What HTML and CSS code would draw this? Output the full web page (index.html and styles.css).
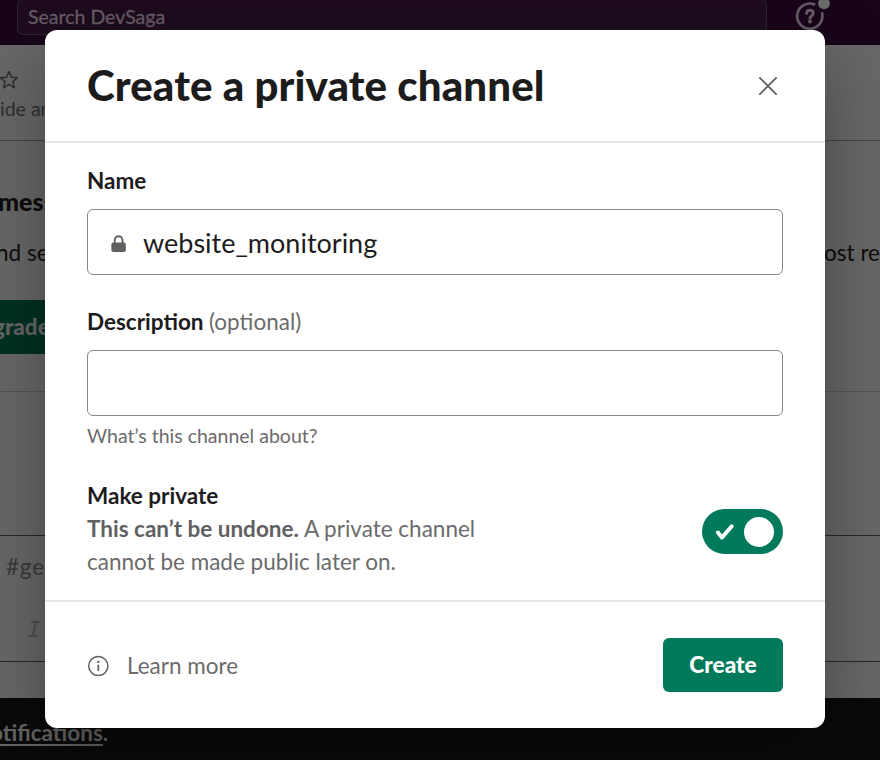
FILE: index.html
```html
<!DOCTYPE html>
<html lang="en">
<head>
<meta charset="utf-8">
<title>Create a private channel</title>
<link rel="stylesheet" href="styles.css">
</head>
<body>
<div class="app">
  <header class="topbar">
    <div class="search">Search DevSaga</div>
    <div class="help">
      <svg width="36" height="32" viewBox="0 0 36 32" fill="none">
        <path d="M20.200 4.800A12.600 12.600 0 1 0 26.800 12.400" stroke="#655b65" stroke-width="2.700"/>
        <path d="M11.600 13.600c0-2.100 1.300-3.400 3.300-3.400s3.400 1.200 3.400 3c0 2.500-3.400 2.600-3.400 5.200" stroke="#655b65" stroke-width="2.900" stroke-linecap="round"/>
        <circle cx="15" cy="21.600" r="2" fill="#655b65"/>
        <circle cx="29" cy="3.300" r="5.900" fill="#6b6a6c"/>
      </svg>
    </div>
  </header>
  <section class="chan-head">
    <svg class="star" width="20" height="20" viewBox="0 0 20 20" fill="none" stroke="#2c2c2d" stroke-width="1.400" stroke-linejoin="round"><path d="M10 1.500l2.500 5.700 6 .5-4.600 3.900 1.500 6.200-5.400-3.400-5.400 3.400 1.500-6.200L1.500 7.700l6-.5z"/></svg>
    <div class="topic">ide ar</div>
  </section>
  <section class="banner">
    <div class="banner-title">mess</div>
    <div class="banner-row"><span>nd se</span><span>ost re</span></div>
    <div class="upgrade">grade</div>
  </section>
  <section class="messages"></section>
  <section class="composer">
    <div class="placeholder">#ge</div>
    <div class="format">I</div>
  </section>
  <div class="gap"></div>
  <footer class="notice"><span class="link">otifications</span>.</footer>
</div>

<div class="modal">
  <div class="modal-head">
    <h1>Create a private channel</h1>
    <svg class="close" width="20" height="20" viewBox="0 0 20 20" stroke="#616061" stroke-width="1.900" stroke-linecap="round"><path d="M1.900 1.900l16.200 16.200M18.100 1.900L1.900 18.100"/></svg>
  </div>
  <div class="modal-body">
    <label class="label">Name</label>
    <div class="input">
      <svg class="lock" width="16" height="18" viewBox="0 0 16 18"><rect x=".4" y="7.500" width="14.400" height="9.500" rx="1.800" fill="#616061"/><path d="M3.700 8.500V5.200a3.900 3.900 0 0 1 7.800 0v3.300" fill="none" stroke="#616061" stroke-width="1.900"/></svg>
      <span>website_monitoring</span>
    </div>
    <label class="label second">Description <span class="optional">(optional)</span></label>
    <div class="input"></div>
    <div class="hint">What’s this channel about?</div>
    <div class="private">
      <div class="private-text">
        <div class="label">Make private</div>
        <p><b>This can’t be undone.</b> A private channel<br>cannot be made public later on.</p>
      </div>
      <div class="toggle">
        <svg width="20" height="18" viewBox="0 0 20 18" fill="none" stroke="#fff" stroke-width="4" stroke-linecap="round" stroke-linejoin="round"><path d="M2.900 9.500l4.100 5L16.700 3.300"/></svg>
        <span class="knob"></span>
      </div>
    </div>
  </div>
  <div class="modal-foot">
    <div class="learn">
      <svg width="22" height="22" viewBox="0 0 22 22" fill="none"><circle cx="11.300" cy="12" r="9.600" stroke="#616061" stroke-width="1.500"/><path d="M11.300 10.700v6.200" stroke="#616061" stroke-width="1.700"/><circle cx="11.300" cy="7.900" r="1.200" fill="#616061"/></svg>
      <span>Learn more</span>
    </div>
    <button class="create">Create</button>
  </div>
</div>
</body>
</html>
```
FILE: styles.css
```css
* { box-sizing: border-box; }
body {
  margin: 0;
  width: 880px;
  height: 760px;
  overflow: hidden;
  position: relative;
  font-family: Lato, "Liberation Sans", sans-serif;
  font-size: 22.5px;
  color: #1d1c1d;
}
.app {
  height: 760px;
  display: flex;
  flex-direction: column;
  background: #686868;
  overflow: hidden;
  white-space: nowrap;
}
.app > * { flex: none; }
.topbar {
  height: 45px;
  display: flex;
  background: #190519;
}
.search {
  width: 750px;
  height: 36px;
  margin: -1px 0 0 17px;
  padding-left: 10px;
  border: 1px solid #2f2130;
  border-radius: 6px;
  background: #1e0c1e;
  color: #665d66;
  font-size: 19.5px;
  line-height: 34px;
  -webkit-text-stroke: .3px #665d66;
}
.help { margin-left: 28px; }
.help svg { display: block; }
.chan-head {
  height: 96px;
  padding-top: 25px;
  border-bottom: 1px solid #464646;
}
.star { display: block; margin-left: -1px; }
.topic {
  margin-top: 7px;
  font-size: 19.5px;
  line-height: 24px;
  color: #2f2f2f;
}
.banner {
  height: 251px;
  padding-top: 43px;
  border-bottom: 1px solid #555;
  color: #0c0c0c;
}
.banner-title {
  font-weight: 900;
  font-size: 25px;
  line-height: 34px;
  margin-left: -2px;
}
.banner-row {
  display: flex;
  justify-content: space-between;
  margin-top: 18px;
  line-height: 34px;
}
.banner-row span:first-child { margin-left: -4px; }
.upgrade {
  width: 120px;
  height: 54px;
  margin-top: 30px;
  background: #003123;
  color: #666;
  font-weight: 900;
  line-height: 54px;
  text-indent: -7px;
}
.messages { height: 143px; }
.composer {
  height: 127px;
  border-top: 1px solid #282828;
  border-bottom: 1px solid #282828;
}
.placeholder {
  margin: 14px 0 0 6px;
  line-height: 34px;
  letter-spacing: .8px;
  color: #3a3a3a;
}
.format {
  margin: 29px 0 0 27px;
  font: italic 23px/36px "Liberation Mono", monospace;
  color: #505050;
}
.gap { height: 36px; }
.notice {
  height: 62px;
  background: #0a0a0a;
  color: #666;
  font-weight: 700;
  line-height: 70px;
  text-indent: -10px;
}
.link {
  text-decoration: underline;
  text-decoration-thickness: 2px;
  text-underline-offset: 3px;
  text-decoration-skip-ink: none;
}
.modal {
  position: absolute;
  left: 45px;
  top: 30px;
  width: 780px;
  height: 698px;
  display: flex;
  flex-direction: column;
  background: #fff;
  border-radius: 12px;
  box-shadow: 0 27px 72px rgba(0, 0, 0, .35);
}
.modal-head {
  height: 113px;
  padding: 0 47px 0 42px;
  display: flex;
  align-items: center;
  justify-content: space-between;
  border-bottom: 2px solid #e6e6e6;
}
h1 {
  margin: -2px 0 0;
  font-size: 42px;
  font-weight: 900;
  letter-spacing: .12px;
  line-height: 60px;
}
.close { margin-top: 1px; }
.modal-body {
  height: 457px;
  padding: 21px 42px 0;
}
.label {
  display: block;
  font-weight: 700;
  line-height: 33px;
}
.second { margin-top: 30px; }
.optional { font-weight: 400; color: #6c6b6c; }
.input {
  height: 66px;
  margin-top: 12px;
  padding-left: 23px;
  display: flex;
  align-items: center;
  gap: 16px;
  border: 1px solid #868686;
  border-radius: 6px;
  font-size: 27px;
}
.lock { margin-top: 3px; }
.hint {
  margin-top: 6px;
  font-size: 19.5px;
  line-height: 28px;
  color: #6c6b6c;
}
.private {
  margin-top: 29px;
  display: flex;
  justify-content: space-between;
}
.private p {
  margin: 0;
  line-height: 33px;
  color: #6c6b6c;
}
.private b { color: #616061; }
.toggle {
  width: 81px;
  height: 45px;
  margin-top: 30px;
  padding: 0 9px 0 13px;
  display: flex;
  align-items: center;
  justify-content: space-between;
  border-radius: 23px;
  background: #007a5a;
}
.knob {
  width: 30px;
  height: 30px;
  margin-top: 1px;
  border-radius: 50%;
  background: #fff;
}
.modal-foot {
  flex: 1;
  padding: 0 42px;
  display: flex;
  align-items: center;
  justify-content: space-between;
  border-top: 2px solid #e6e6e6;
}
.learn {
  display: flex;
  align-items: center;
  gap: 18px;
  color: #6c6b6c;
}
.create {
  width: 120px;
  height: 54px;
  padding: 0 0 2px;
  border: 0;
  border-radius: 6px;
  background: #007a5a;
  color: #fff;
  font: 900 22.7px Lato, sans-serif;
}
```
